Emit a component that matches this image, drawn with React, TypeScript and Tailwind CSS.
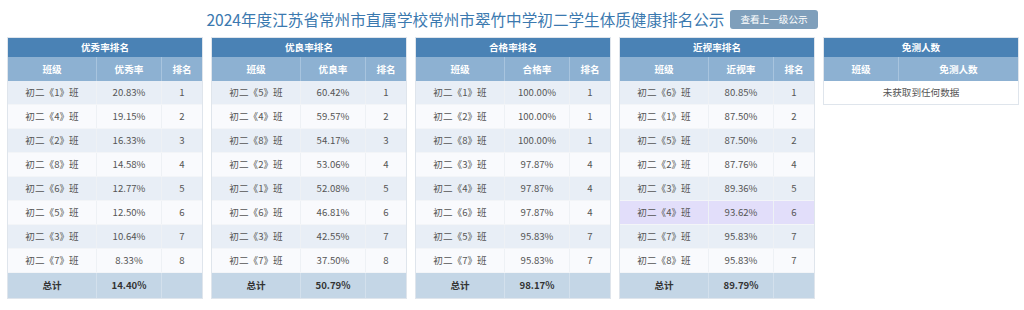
type Row = [string, string, string];

type RankTable = {
  title: string;
  rateLabel: string;
  rows: Row[];
  total: string;
  highlight?: number;
};

const tables: RankTable[] = [
  {
    title: "优秀率排名",
    rateLabel: "优秀率",
    rows: [
      ["1", "20.83%", "1"],
      ["4", "19.15%", "2"],
      ["2", "16.33%", "3"],
      ["8", "14.58%", "4"],
      ["6", "12.77%", "5"],
      ["5", "12.50%", "6"],
      ["3", "10.64%", "7"],
      ["7", "8.33%", "8"],
    ],
    total: "14.40%",
  },
  {
    title: "优良率排名",
    rateLabel: "优良率",
    rows: [
      ["5", "60.42%", "1"],
      ["4", "59.57%", "2"],
      ["8", "54.17%", "3"],
      ["2", "53.06%", "4"],
      ["1", "52.08%", "5"],
      ["6", "46.81%", "6"],
      ["3", "42.55%", "7"],
      ["7", "37.50%", "8"],
    ],
    total: "50.79%",
  },
  {
    title: "合格率排名",
    rateLabel: "合格率",
    rows: [
      ["1", "100.00%", "1"],
      ["2", "100.00%", "1"],
      ["8", "100.00%", "1"],
      ["3", "97.87%", "4"],
      ["4", "97.87%", "4"],
      ["6", "97.87%", "4"],
      ["5", "95.83%", "7"],
      ["7", "95.83%", "7"],
    ],
    total: "98.17%",
  },
  {
    title: "近视率排名",
    rateLabel: "近视率",
    rows: [
      ["6", "80.85%", "1"],
      ["1", "87.50%", "2"],
      ["5", "87.50%", "2"],
      ["2", "87.76%", "4"],
      ["3", "89.36%", "5"],
      ["4", "93.62%", "6"],
      ["7", "95.83%", "7"],
      ["8", "95.83%", "7"],
    ],
    total: "89.79%",
    highlight: 5,
  },
];

const font = { fontFamily: '"Noto Sans CJK SC", "Noto Sans", sans-serif' };

function Ranking({ table }: { table: RankTable }) {
  return (
    <div className="w-[196px] shrink-0 border border-[#dfe5ec] text-[9.6px]">
      <div className="flex h-[19px] items-center justify-center bg-[#4a82b5] font-bold text-white">
        {table.title}
      </div>
      <div className="flex h-[24px] bg-[#8db1d2] font-bold text-white">
        <div className="flex w-[89px] items-center justify-center border-r border-[#a8c4de]">班级</div>
        <div className="flex w-[65px] items-center justify-center border-r border-[#a8c4de]">{table.rateLabel}</div>
        <div className="flex flex-1 items-center justify-center">排名</div>
      </div>
      {table.rows.map((r, i) => {
        const bg =
          table.highlight === i
            ? "bg-[#e2defa]"
            : i % 2 === 0
              ? "bg-[#e8eef6]"
              : "bg-[#f9fafd]";
        return (
          <div key={i} className={`flex h-[24px] border-b border-[#f3f5f8] text-[#555] ${bg}`}>
            <div className="flex w-[89px] items-center justify-center border-r border-[#eef1f5]">
              初二《{r[0]}》班
            </div>
            <div className="flex w-[65px] items-center justify-center border-r border-[#eef1f5]">{r[1]}</div>
            <div className="flex flex-1 items-center justify-center">{r[2]}</div>
          </div>
        );
      })}
      <div className="flex h-[25px] bg-[#c4d6e6] font-bold text-[#333]">
        <div className="flex w-[89px] items-center justify-center border-r border-[#d3e0ec]">总计</div>
        <div className="flex w-[65px] items-center justify-center border-r border-[#d3e0ec]">{table.total}</div>
        <div className="flex-1" />
      </div>
    </div>
  );
}

function Exempt() {
  return (
    <div className="w-[196px] shrink-0 self-start border border-[#dfe5ec] text-[9.6px]">
      <div className="flex h-[19px] items-center justify-center bg-[#4a82b5] font-bold text-white">
        免测人数
      </div>
      <div className="flex h-[24px] bg-[#8db1d2] font-bold text-white">
        <div className="flex w-[75px] items-center justify-center border-r border-[#a8c4de]">班级</div>
        <div className="flex flex-1 items-center justify-center">免测人数</div>
      </div>
      <div className="flex h-[23px] items-center justify-center bg-white text-[#555]">未获取到任何数据</div>
    </div>
  );
}

export default function App() {
  return (
    <div className="h-[310px] w-[1024px] bg-white" style={font}>
      <div className="flex items-center justify-center gap-[6px] pt-[9px]">
        <h1 className="text-[15.6px] leading-[21px] text-[#3b79af]">
          2024年度江苏省常州市直属学校常州市翠竹中学初二学生体质健康排名公示
        </h1>
        <button
          type="button"
          className="h-[19px] rounded-[3px] bg-[#7f9fbb] px-[10px] text-[9.6px] leading-[19px] text-white"
        >
          查看上一级公示
        </button>
      </div>
      <div className="mt-[7px] flex gap-[8px] pl-[7px]">
        {tables.map((t) => (
          <Ranking key={t.title} table={t} />
        ))}
        <Exempt />
      </div>
    </div>
  );
}
